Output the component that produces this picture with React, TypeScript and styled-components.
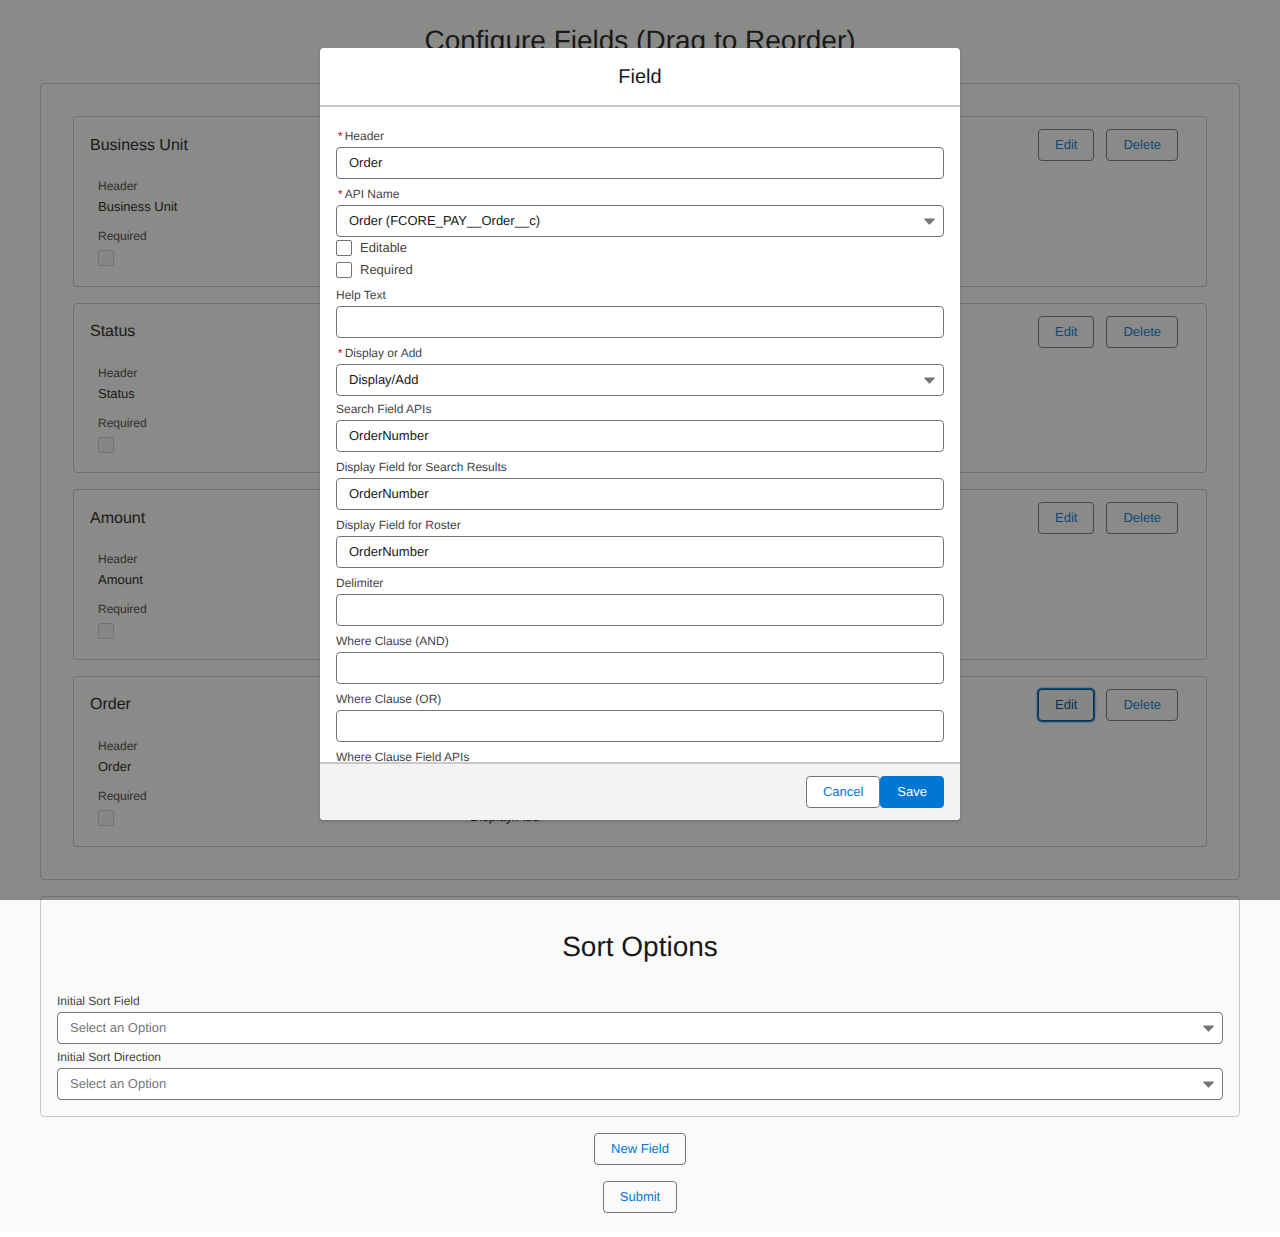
import React from "react";
import styled, { createGlobalStyle } from "styled-components";

const Global = createGlobalStyle`
  html, body { margin: 0; padding: 0; background: #fff; }
  body { font-family: "Liberation Sans", Arial, sans-serif; font-size: 13px; color: #181818; text-rendering: geometricPrecision; }
  * { box-sizing: border-box; }
`;
const Page = styled.div`
  position: relative;
  background: #fafaf9;
  padding: 24px 40px 20px;
`;
const Title = styled.h1`
  margin: 0 0 25px;
  font-size: 28px;
  font-weight: 400;
  line-height: 34px;
  text-align: center;
`;
const Panel = styled.section`
  border: 1px solid #c9c9c9;
  border-radius: 4px;
  background: #fafaf9;
  padding: 32px;
  display: flex;
  flex-direction: column;
  gap: 16px;
`;
const SortPanel = styled(Panel)`
  margin-top: 16px;
  padding: 16px;
  gap: 0;
`;
const SortTitle = styled(Title)`
  margin: 17px 0 28px;
`;
const Card = styled.article`
  height: 170.67px;
  border: 1px solid #c9c9c9;
  border-radius: 4px;
  padding: 12px 28px 0 16px;
`;
const CardHead = styled.header`
  display: flex;
  justify-content: space-between;
  align-items: center;
  height: 32px;
`;
const CardTitle = styled.h2`
  margin: 1px 0 0;
  font-size: 16px;
  font-weight: 400;
  line-height: 30px;
`;
const Actions = styled.div`
  display: flex;
  gap: 12px;
`;
const Button = styled.button<{ $focus?: boolean }>`
  height: 32px;
  padding: 0 16px 1px;
  background: ${(p) => (p.$focus ? "#f3f3f3" : "transparent")};
  border: 1px solid ${(p) => (p.$focus ? "#014486" : "#747474")};
  border-radius: 4px;
  color: ${(p) => (p.$focus ? "#014486" : "#0176d3")};
  font: 13px "Liberation Sans", Arial, sans-serif;
  text-rendering: geometricPrecision;
  box-shadow: ${(p) => (p.$focus ? "0 0 0 1px #0176d3, 0 0 2px 1px #0176d3" : "none")};
`;
const WhiteButton = styled(Button)`
  background: #fff;
`;
const SaveButton = styled(Button)`
  background: #0176d3;
  border-color: #0176d3;
  color: #fff;
`;
const CardGrid = styled.div`
  display: grid;
  grid-template-columns: 372px 372px 1fr;
  grid-auto-rows: 50px;
  padding: 16px 0 0 8px;
`;
const Cell = styled.div`
  display: flex;
  flex-direction: column;
  align-items: flex-start;
`;
const CellLabel = styled.span`
  font-size: 12px;
  line-height: 18px;
  color: #444;
`;
const CellValue = styled.span`
  margin-top: 2px;
  font-size: 13px;
  line-height: 20px;
`;
const CheckBox = styled.span<{ $disabled?: boolean }>`
  display: block;
  flex: none;
  width: 16px;
  height: 16px;
  margin-top: 5px;
  border: 1px solid ${(p) => (p.$disabled ? "#c9c9c9" : "#747474")};
  border-radius: 2px;
  background: ${(p) => (p.$disabled ? "#f3f3f3" : "#fff")};
`;
const Centered = styled.div`
  display: flex;
  justify-content: center;
  margin-top: 16px;
`;
const Backdrop = styled.div`
  position: absolute;
  left: 0;
  top: 0;
  width: 100%;
  height: 900px;
  background: rgba(26, 26, 24, 0.5);
`;
const Modal = styled.div`
  position: absolute;
  left: 320px;
  top: 48px;
  width: 640px;
  height: 772px;
  display: flex;
  flex-direction: column;
  background: #fff;
  border-radius: 4px;
  overflow: hidden;
  box-shadow: 0 2px 3px rgba(0, 0, 0, 0.16);
`;
const ModalHead = styled.header`
  flex: none;
  height: 59px;
  border-bottom: 2px solid #c9c9c9;
  text-align: center;
  font-size: 20px;
  line-height: 58px;
`;
const ModalBody = styled.div`
  flex: 1;
  min-height: 0;
  overflow: hidden;
  padding: 20px 16px 0;
`;
const ModalFoot = styled.footer`
  flex: none;
  height: 58px;
  border-top: 2px solid #c9c9c9;
  background: #f3f3f3;
  display: flex;
  justify-content: flex-end;
  align-items: center;
  padding: 0 16px;
`;
const Field = styled.div<{ $after?: number }>`
  margin-bottom: ${(p) => p.$after ?? 6}px;
`;
const Label = styled.label`
  display: block;
  margin-bottom: 2px;
  font-size: 12px;
  line-height: 18px;
  color: #444;
`;
const Star = styled.abbr`
  margin: 0 2px;
  color: #ea001e;
  text-decoration: none;
`;
const Input = styled.input`
  display: block;
  width: 100%;
  height: 32px;
  padding: 0 12px 1px;
  border: 1px solid #747474;
  border-radius: 4px;
  background: #fff;
  color: #181818;
  font: 13px "Liberation Sans", Arial, sans-serif;
  text-rendering: geometricPrecision;
  outline: none;
`;
const SelectBox = styled.div`
  position: relative;
`;
const SelectInput = styled.select<{ $placeholder?: boolean }>`
  display: block;
  width: 100%;
  height: 32px;
  padding: 0 32px 1px 12px;
  border: 1px solid #747474;
  border-radius: 4px;
  background: #fff;
  color: ${(p) => (p.$placeholder ? "#747474" : "#181818")};
  font: 13px "Liberation Sans", Arial, sans-serif;
  text-rendering: geometricPrecision;
  appearance: none;
  outline: none;
`;
const Caret = styled.svg`
  position: absolute;
  right: 9px;
  top: 13px;
  width: 11px;
  height: 7px;
  fill: #747474;
  pointer-events: none;
`;
const CheckRow = styled.label`
  display: flex;
  align-items: center;
  gap: 8px;
  height: 16px;
  margin-bottom: 6px;
  font-size: 13px;
  color: #444;
`;
const CheckText = styled.span`
  margin-top: -2px;
`;
const FormCheck = styled(CheckBox)`
  margin-top: 0;
`;
const ChecksBlock = styled.div`
  margin-bottom: 8px;
`;

function Select({ value, placeholder }: { value: string; placeholder?: boolean }) {
  return (
    <SelectBox>
      <SelectInput $placeholder={placeholder} defaultValue={value}>
        <option>{value}</option>
      </SelectInput>
      <Caret viewBox="0 0 11 7">
        <path d="M0.6 0.4h9.8c.4 0 .7.4.4.8L5.9 6.5c-.2.3-.6.3-.8 0L.2 1.2C-.1.8.2.4.6.4z" />
      </Caret>
    </SelectBox>
  );
}

const cards = ["Business Unit", "Status", "Amount", "Order"];

export default function App() {
  return (
    <Page>
      <Global />
      <Title>Configure Fields (Drag to Reorder)</Title>
      <Panel>
        {cards.map((name) => (
          <Card key={name}>
            <CardHead>
              <CardTitle>{name}</CardTitle>
              <Actions>
                <Button $focus={name === "Order"}>Edit</Button>
                <Button>Delete</Button>
              </Actions>
            </CardHead>
            <CardGrid>
              <Cell>
                <CellLabel>Header</CellLabel>
                <CellValue>{name}</CellValue>
              </Cell>
              <Cell>
                <CellLabel>API Name</CellLabel>
                <CellValue>{name}</CellValue>
              </Cell>
              <Cell>
                <CellLabel>Editable</CellLabel>
                <CheckBox $disabled />
              </Cell>
              <Cell>
                <CellLabel>Required</CellLabel>
                <CheckBox $disabled />
              </Cell>
              <Cell>
                <CellLabel>Display or Add</CellLabel>
                <CellValue>Display/Add</CellValue>
              </Cell>
            </CardGrid>
          </Card>
        ))}
      </Panel>
      <SortPanel>
        <SortTitle as="h2">Sort Options</SortTitle>
        <Field $after={4}>
          <Label>Initial Sort Field</Label>
          <Select value="Select an Option" placeholder />
        </Field>
        <Field $after={0}>
          <Label>Initial Sort Direction</Label>
          <Select value="Select an Option" placeholder />
        </Field>
      </SortPanel>
      <Centered>
        <Button>New Field</Button>
      </Centered>
      <Centered>
        <Button>Submit</Button>
      </Centered>
      <Backdrop />
      <Modal>
        <ModalHead>Field</ModalHead>
        <ModalBody>
          <Field>
            <Label><Star>*</Star>Header</Label>
            <Input readOnly value="Order" />
          </Field>
          <Field $after={3}>
            <Label><Star>*</Star>API Name</Label>
            <Select value="Order (FCORE_PAY__Order__c)" />
          </Field>
          <ChecksBlock>
            <CheckRow><FormCheck /><CheckText>Editable</CheckText></CheckRow>
            <CheckRow><FormCheck /><CheckText>Required</CheckText></CheckRow>
          </ChecksBlock>
          <Field>
            <Label>Help Text</Label>
            <Input readOnly value="" />
          </Field>
          <Field $after={4}>
            <Label><Star>*</Star>Display or Add</Label>
            <Select value="Display/Add" />
          </Field>
          <Field>
            <Label>Search Field APIs</Label>
            <Input readOnly value="OrderNumber" />
          </Field>
          <Field>
            <Label>Display Field for Search Results</Label>
            <Input readOnly value="OrderNumber" />
          </Field>
          <Field>
            <Label>Display Field for Roster</Label>
            <Input readOnly value="OrderNumber" />
          </Field>
          <Field>
            <Label>Delimiter</Label>
            <Input readOnly value="" />
          </Field>
          <Field>
            <Label>Where Clause (AND)</Label>
            <Input readOnly value="" />
          </Field>
          <Field>
            <Label>Where Clause (OR)</Label>
            <Input readOnly value="" />
          </Field>
          <Field>
            <Label>Where Clause Field APIs</Label>
            <Input readOnly value="" />
          </Field>
        </ModalBody>
        <ModalFoot>
          <WhiteButton>Cancel</WhiteButton>
          <SaveButton>Save</SaveButton>
        </ModalFoot>
      </Modal>
    </Page>
  );
}
